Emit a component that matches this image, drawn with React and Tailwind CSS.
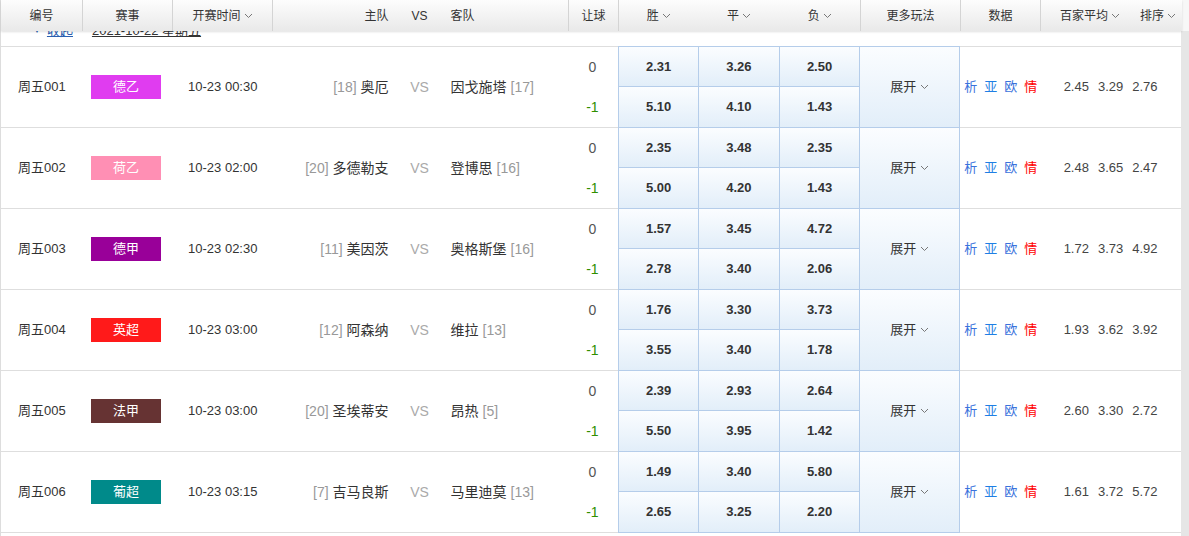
const rows = [
  { no: '周五001', league: '德乙', color: 'bg-[#e03cf0]', time: '10-23 00:30', homeRank: '[18]', home: '奥厄', away: '因戈施塔', awayRank: '[17]', odds: [['2.31', '3.26', '2.50'], ['5.10', '4.10', '1.43']], avg: ['2.45', '3.29', '2.76'] },
  { no: '周五002', league: '荷乙', color: 'bg-[#ff8fb4]', time: '10-23 02:00', homeRank: '[20]', home: '多德勒支', away: '登博思', awayRank: '[16]', odds: [['2.35', '3.48', '2.35'], ['5.00', '4.20', '1.43']], avg: ['2.48', '3.65', '2.47'] },
  { no: '周五003', league: '德甲', color: 'bg-[#990099]', time: '10-23 02:30', homeRank: '[11]', home: '美因茨', away: '奥格斯堡', awayRank: '[16]', odds: [['1.57', '3.45', '4.72'], ['2.78', '3.40', '2.06']], avg: ['1.72', '3.73', '4.92'] },
  { no: '周五004', league: '英超', color: 'bg-[#ff1a1a]', time: '10-23 03:00', homeRank: '[12]', home: '阿森纳', away: '维拉', awayRank: '[13]', odds: [['1.76', '3.30', '3.73'], ['3.55', '3.40', '1.78']], avg: ['1.93', '3.62', '3.92'] },
  { no: '周五005', league: '法甲', color: 'bg-[#663333]', time: '10-23 03:00', homeRank: '[20]', home: '圣埃蒂安', away: '昂热', awayRank: '[5]', odds: [['2.39', '2.93', '2.64'], ['5.50', '3.95', '1.42']], avg: ['2.60', '3.30', '2.72'] },
  { no: '周五006', league: '葡超', color: 'bg-[#008a8a]', time: '10-23 03:15', homeRank: '[7]', home: '吉马良斯', away: '马里迪莫', awayRank: '[13]', odds: [['1.49', '3.40', '5.80'], ['2.65', '3.25', '2.20']], avg: ['1.61', '3.72', '5.72'] },
]

const oddsW = ['w-[80px]', 'w-[81px]', 'w-[81px]']

function Chevron({ className = '' }) {
  return (
    <svg width="9" height="6" viewBox="0 0 9 6" fill="none" className={className}>
      <path d="M1 1l3.5 3.5L8 1" stroke="#777" strokeWidth="1" />
    </svg>
  )
}

function Header() {
  const cell = 'h-full flex items-center justify-center border-r border-[#d4d4d4] whitespace-nowrap'
  return (
    <div className="absolute top-0 left-0 w-[1181px] h-[31px] flex text-[12px] text-[#333] bg-gradient-to-b from-[#fdfdfd] to-[#e9e9e9] shadow-[0_1px_2px_rgba(0,0,0,0.12)] z-10">
      <div className={`${cell} w-[82px]`}>编号</div>
      <div className={`${cell} w-[90px]`}>赛事</div>
      <div className={`${cell} w-[100px] gap-[3px]`}>开赛时间<Chevron /></div>
      <div className="h-full flex items-center w-[296px] border-r border-[#d4d4d4]">
        <div className="w-[126px] pr-[10px] text-right">主队</div>
        <div className="w-[42px] text-center">VS</div>
        <div className="w-[128px] pl-[10px]">客队</div>
      </div>
      <div className={`${cell} w-[50px]`}>让球</div>
      <div className="h-full flex items-center w-[242px] border-r border-[#d4d4d4]">
        {['胜', '平', '负'].map((t, i) => (
          <div key={t} className={`${oddsW[i]} flex items-center justify-center gap-[3px]`}>{t}<Chevron /></div>
        ))}
      </div>
      <div className={`${cell} w-[100px]`}>更多玩法</div>
      <div className={`${cell} w-[80px]`}>数据</div>
      <div className="h-full flex items-center w-[141px] pl-[19px] whitespace-nowrap">
        <span className="flex items-center gap-[3px]">百家平均<Chevron /></span>
        <span className="flex items-center gap-[3px] ml-[20px]">排序<Chevron /></span>
      </div>
    </div>
  )
}

function Row({ r }) {
  return (
    <div className="flex h-[81px] border-b border-[#dedede] text-[13px] text-[#333]">
      <div className="w-[82px] flex items-center justify-center">{r.no}</div>
      <div className="w-[90px] flex items-center pl-[8px]">
        <div className={`w-[70px] h-[24px] flex items-center justify-center text-white ${r.color}`}>{r.league}</div>
      </div>
      <div className="w-[100px] flex items-center justify-center">{r.time}</div>
      <div className="w-[126px] pr-[10px] flex items-center justify-end text-[14px] whitespace-nowrap">
        <span className="text-[#999] mr-[4px]">{r.homeRank}</span>{r.home}
      </div>
      <div className="w-[42px] flex items-center justify-center text-[14px] text-[#aaa]">VS</div>
      <div className="w-[128px] pl-[10px] flex items-center text-[14px] whitespace-nowrap">
        {r.away}<span className="text-[#999] ml-[4px]">{r.awayRank}</span>
      </div>
      <div className="w-[50px] pr-[2px] flex flex-col text-[14px]">
        <div className="h-[40px] flex items-center justify-center text-[#555]">0</div>
        <div className="h-[40px] flex items-center justify-center text-[#2f8f00]">-1</div>
      </div>
      <div className="w-[242px] h-[82px] -mt-px flex flex-col border-t border-l border-[#b5cdea] font-bold text-[#333]">
        {r.odds.map((line, li) => (
          <div key={li} className="flex">
            {line.map((o, i) => (
              <div
                key={i}
                className={`${oddsW[i]} ${li === 0 ? 'h-[40px]' : 'h-[41px]'} flex items-center justify-center border-r border-b border-[#b5cdea] bg-gradient-to-b from-[#fbfdff] to-[#e2eef9]`}
              >
                {o}
              </div>
            ))}
          </div>
        ))}
      </div>
      <div className="w-[100px] h-[82px] -mt-px flex items-center justify-center gap-1 border-y border-r border-[#b5cdea] bg-gradient-to-b from-[#fbfdff] to-[#e2eef9]">
        展开<Chevron />
      </div>
      <div className="w-[80px] flex items-center pl-[4px] gap-[7px]">
        <span className="text-[#3a72dc]">析</span>
        <span className="text-[#1f7fe4]">亚</span>
        <span className="text-[#3a72dc]">欧</span>
        <span className="text-[#ff0000]">情</span>
      </div>
      <div className="w-[141px] flex items-center justify-center gap-[9px] text-[#444]">
        {r.avg.map((a, i) => (
          <span key={i}>{a}</span>
        ))}
      </div>
    </div>
  )
}

export default function App() {
  return (
    <div className="w-[1189px] h-[536px] overflow-hidden flex bg-white font-['Liberation_Sans','Noto_Sans_CJK_SC',sans-serif]">
      <div className="relative w-[1181px] h-full border-l border-[#dddddd]">
        <Header />
        <div className="h-[47px] flex items-end pb-[7px] border-b border-[#dedede] text-[13px] leading-[16px]">
          <span className="ml-[32px] text-[#2a5fb0] flex items-center gap-[6px]">
            <span className="text-[8px]">▼</span>
            <span className="underline">收起</span>
          </span>
          <span className="ml-[19px] text-[#333] underline">2021-10-22 星期五</span>
        </div>
        {rows.map(r => (
          <Row key={r.no} r={r} />
        ))}
      </div>
      <div className="w-[8px] h-full flex flex-col">
        <div className="h-[31px] bg-[#f7f7f7]" />
        <div className="flex-1 bg-[#e6e6e6]" />
      </div>
    </div>
  )
}
